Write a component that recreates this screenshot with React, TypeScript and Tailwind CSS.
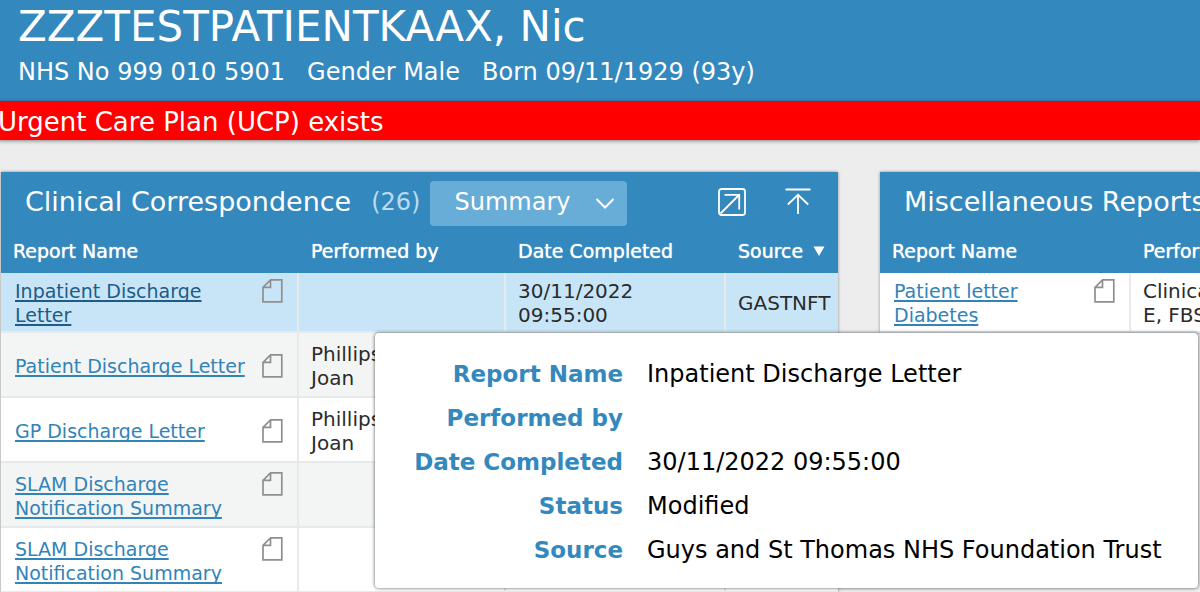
import React from "react";

type Report = { name: string; performedBy?: string[]; completed?: string[]; source?: string };

const clinicalReports: Report[] = [
  { name: "Inpatient Discharge Letter", completed: ["30/11/2022", "09:55:00"], source: "GASTNFT" },
  { name: "Patient Discharge Letter", performedBy: ["Phillips,", "Joan"] },
  { name: "GP Discharge Letter", performedBy: ["Phillips,", "Joan"] },
  { name: "SLAM Discharge Notification Summary" },
  { name: "SLAM Discharge Notification Summary" },
];

const details: [string, string][] = [
  ["Report Name", "Inpatient Discharge Letter"],
  ["Performed by", ""],
  ["Date Completed", "30/11/2022 09:55:00"],
  ["Status", "Modified"],
  ["Source", "Guys and St Thomas NHS Foundation Trust"],
];

function DocumentIcon() {
  return (
    <svg className="h-6 w-[21px] shrink-0" viewBox="0 0 21 24" fill="none" stroke="#8f8f8f" strokeWidth="1.7" aria-hidden="true">
      <path d="M8.5 0.9H19.8V22.9H1V8.4L8.5 0.9V8.4H1" />
    </svg>
  );
}

function OpenIcon() {
  return (
    <svg className="size-7" viewBox="0 0 28 28" fill="none" stroke="white" strokeWidth="1.8" aria-hidden="true">
      <rect x="1" y="1" width="26" height="26" rx="2.5" />
      <path d="M2.5 25.5L21 7M6.5 6.8H21.2V21.5" />
    </svg>
  );
}

function CollapseIcon() {
  return (
    <svg className="size-7" viewBox="0 0 28 28" fill="none" stroke="white" strokeWidth="1.8" aria-hidden="true">
      <path d="M1.5 1.5H26.5M14 26V7M3.8 16.5L14 6.8L24.2 16.5" />
    </svg>
  );
}

function Lines({ lines = [] }: { lines?: string[] }) {
  return (
    <>
      {lines.map((line) => (
        <span key={line} className="block whitespace-nowrap">
          {line}
        </span>
      ))}
    </>
  );
}

function ReportLink({ name, selected = false }: { name: string; selected?: boolean }) {
  return (
    <div className="flex items-start justify-between text-[19px]">
      <a
        href="#report"
        className={`max-w-60 underline decoration-2 underline-offset-2 [text-decoration-skip-ink:none] ${selected ? "text-[#1d5c88]" : "text-[#3283b8]"}`}
      >
        {name}
      </a>
      <DocumentIcon />
    </div>
  );
}

const headCell = "pb-0.5 pl-3 text-left text-[19px] font-normal whitespace-nowrap [text-shadow:0_0_1px_currentColor]";
const cell = "border-r-2 border-b-2 border-[#e6eaec] pt-1.5 pb-1 align-middle last:border-r-0";

export default function App() {
  return (
    <div className="flex h-screen flex-col overflow-hidden bg-[#ededed] font-['DejaVu_Sans',sans-serif] text-[#2b2b2b]">
      <header className="shrink-0 bg-[#3388be] pt-px pb-2.5 pl-[18px] whitespace-nowrap text-white">
        <h1 className="text-[42px] leading-[52px]">ZZZTESTPATIENTKAAX, Nic</h1>
        <div className="flex gap-[22px] text-2xl leading-[38px]">
          <span>NHS No 999 010 5901</span>
          <span>Gender Male</span>
          <span>Born 09/11/1929 (93y)</span>
        </div>
      </header>
      <div role="alert" className="-ml-0.5 shrink-0 bg-[#ff0000] pt-[3px] text-[26px] leading-9 whitespace-nowrap text-white shadow-[0_1px_4px_rgba(0,0,0,0.45)]">
        Urgent Care Plan (UCP) exists
      </div>

      <main className="relative grid grow grid-cols-[minmax(0,1fr)_320px] items-start gap-[42px] pt-8 pl-px text-xl leading-6">
        <section className="border-t border-[#3388be] bg-white shadow-[0_0_3px_rgba(0,0,0,0.4)]">
          <div className="flex h-[57px] items-center bg-[#3388be] pr-[26px] pl-6 text-white">
            <h2 className="text-[27px] whitespace-nowrap">Clinical Correspondence</h2>
            <span className="ml-5 text-2xl text-[#b9dcf1]">(26)</span>
            <div className="relative mt-1 ml-2.5 w-[197px]">
              <select aria-label="View" className="h-[45px] w-full appearance-none rounded-sm bg-[#67add7] pb-[3px] pl-6 text-2xl">
                <option>Summary</option>
              </select>
              <svg className="pointer-events-none absolute top-3.5 right-3 h-4 w-5" viewBox="0 0 20 16" fill="none" stroke="white" strokeWidth="2" aria-hidden="true">
                <path d="M1.5 4L10 12.5L18.5 4" />
              </svg>
            </div>
            <div className="ml-auto flex gap-[38px]">
              <button type="button" aria-label="Open" className="size-7">
                <OpenIcon />
              </button>
              <button type="button" aria-label="Collapse" className="size-7">
                <CollapseIcon />
              </button>
            </div>
          </div>
          <table className="w-full table-fixed border-separate border-spacing-0">
            <colgroup>
              <col className="w-[298px]" />
              <col className="w-[207px]" />
              <col className="w-[220px]" />
              <col />
            </colgroup>
            <thead className="bg-[#3388be] text-white">
              <tr className="h-[43px]">
                <th className={headCell}>Report Name</th>
                <th className={headCell}>Performed by</th>
                <th className={headCell}>Date Completed</th>
                <th className={headCell}>
                  <span className="flex items-center gap-2.5">
                    Source
                    <svg className="h-2.5 w-3 shrink-0" viewBox="0 0 12 10" fill="white" aria-hidden="true">
                      <path d="M0.5 0.5H11.5L6 10Z" />
                    </svg>
                  </span>
                </th>
              </tr>
            </thead>
            <tbody>
              {clinicalReports.map((report, i) => (
                <tr key={i} className={i === 0 ? "h-[60px] bg-[#c8e5f7]" : i % 2 ? "h-[65px] bg-[#f3f5f5]" : "h-[65px]"}>
                  <td className={`${cell} pr-3.5 pl-3.5`}>
                    <ReportLink name={report.name} selected={i === 0} />
                  </td>
                  <td className={`${cell} pl-3`}>
                    <Lines lines={report.performedBy} />
                  </td>
                  <td className={`${cell} pl-3`}>
                    <Lines lines={report.completed} />
                  </td>
                  <td className={`${cell} pl-3`}>{report.source}</td>
                </tr>
              ))}
            </tbody>
          </table>
        </section>

        <section className="overflow-hidden border-t border-[#3388be] bg-white shadow-[0_0_3px_rgba(0,0,0,0.4)]">
          <div className="flex h-[57px] items-center bg-[#3388be] pl-6 text-white">
            <h2 className="text-[27px] whitespace-nowrap">Miscellaneous Reports</h2>
          </div>
          <table className="w-full table-fixed border-separate border-spacing-0">
            <colgroup>
              <col className="w-[251px]" />
              <col />
            </colgroup>
            <thead className="bg-[#3388be] text-white">
              <tr className="h-[43px]">
                <th className={headCell}>Report Name</th>
                <th className={`${headCell} overflow-hidden`}>Performed by</th>
              </tr>
            </thead>
            <tbody>
              <tr className="h-[60px]">
                <td className={`${cell} pr-3.5 pl-3.5`}>
                  <ReportLink name="Patient letter Diabetes" />
                </td>
                <td className={`${cell} overflow-hidden pl-3`}>
                  <Lines lines={["Clinical", "E, FBS"]} />
                </td>
              </tr>
            </tbody>
          </table>
        </section>

        <dl
          role="tooltip"
          className="absolute top-[193px] right-0.5 left-[375px] grid grid-cols-[248px_1fr] gap-x-6 rounded-sm bg-white pt-[19px] pb-4 text-2xl leading-[44px] shadow-[0_0_3px_1px_rgba(0,0,0,0.4)]"
        >
          {details.map(([label, value]) => (
            <React.Fragment key={label}>
              <dt className="text-right text-[23px] font-bold whitespace-nowrap text-[#3388be]">{label}</dt>
              <dd className="whitespace-nowrap text-black">{value}</dd>
            </React.Fragment>
          ))}
        </dl>
      </main>
    </div>
  );
}
